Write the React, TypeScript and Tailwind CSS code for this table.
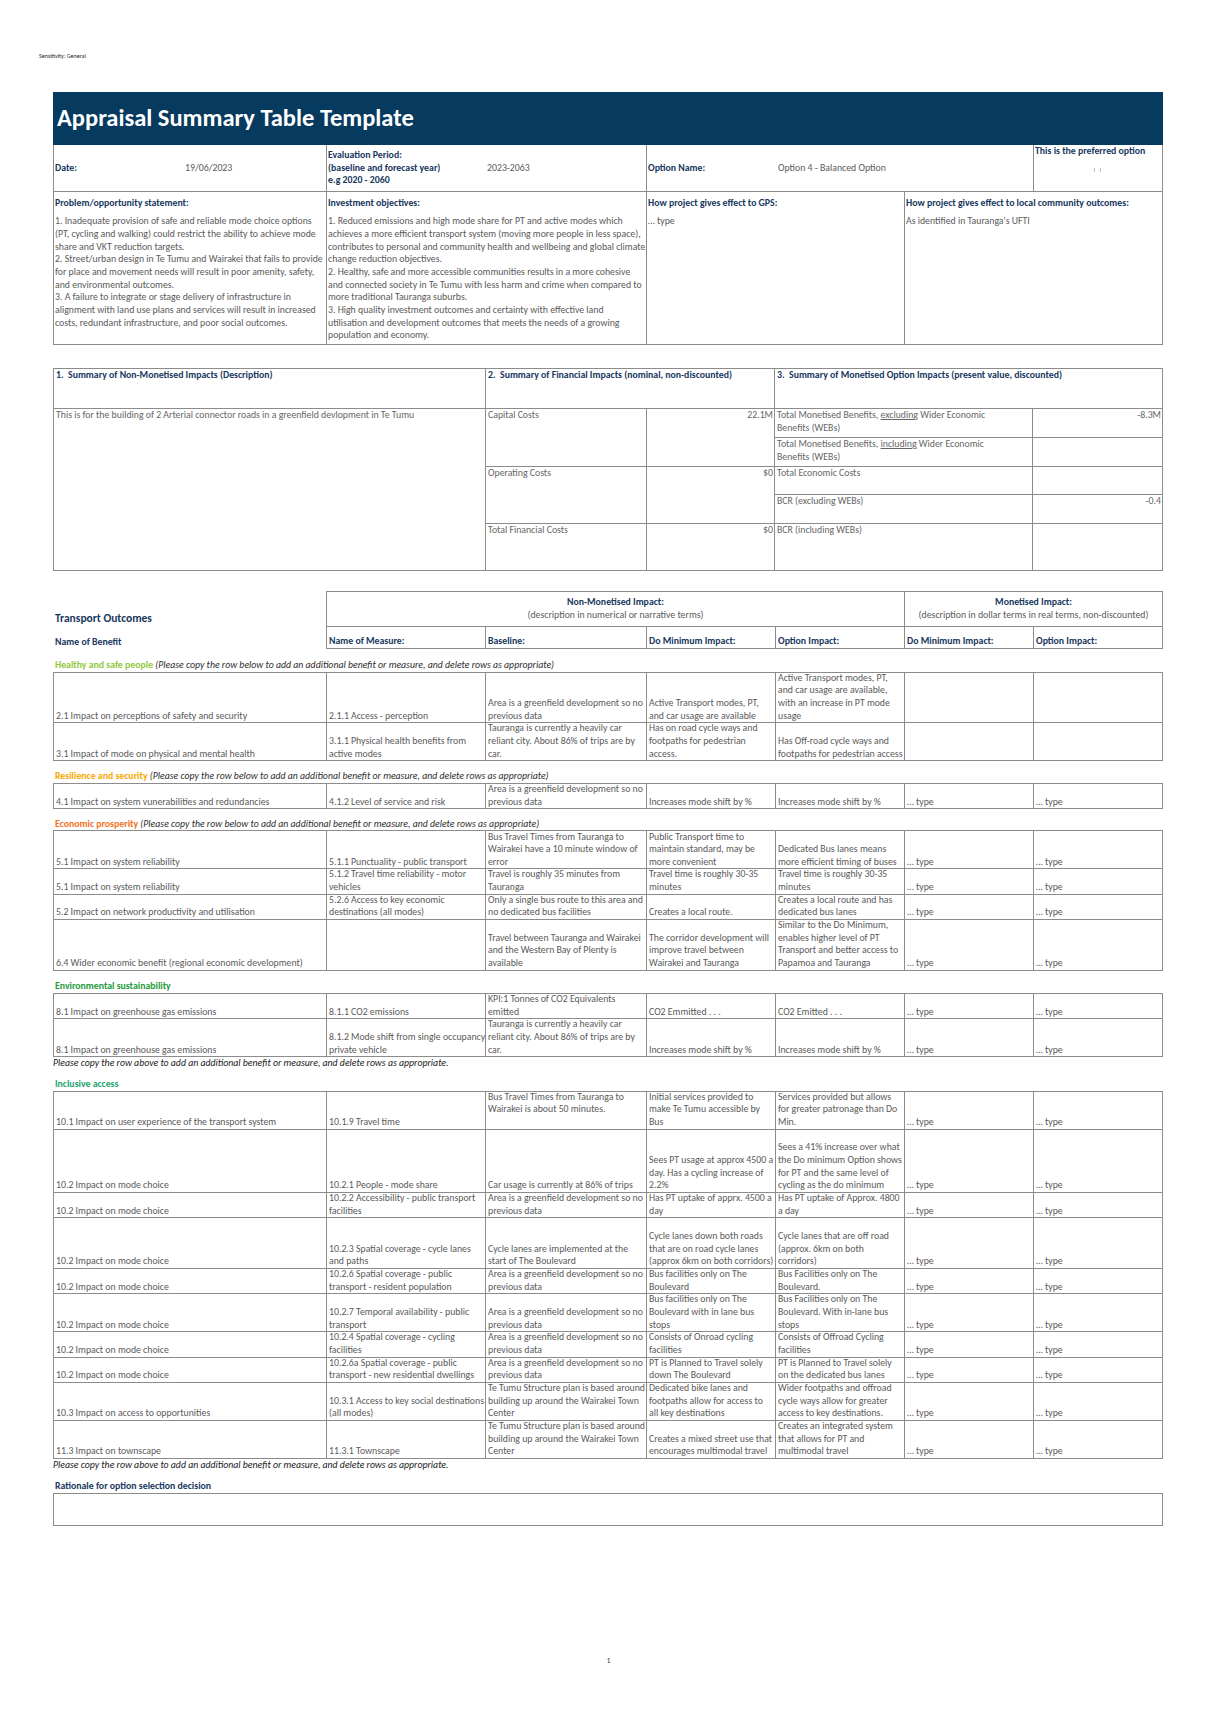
import React from "react";

type Row = { n: number; cells: string[][] };

const LH = 12.67;
const T = ["… type"];

const healthy: Row[] = [
  {
    n: 4,
    cells: [
      ["2.1 Impact on perceptions of safety and security"],
      ["2.1.1 Access - perception"],
      ["Area is a greenfield development so no", "previous data"],
      ["Active Transport modes, PT,", "and car usage are available"],
      ["Active Transport modes, PT,", "and car usage are available,", "with an increase in PT mode", "usage"],
      [],
      [],
    ],
  },
  {
    n: 3,
    cells: [
      ["3.1 Impact of mode on physical and mental health"],
      ["3.1.1 Physical health benefits from", "active modes"],
      ["Tauranga is currently a heavily car", "reliant city. About 86% of trips are by", "car."],
      ["Has on road cycle ways and", "footpaths for pedestrian", "access."],
      ["Has Off-road cycle ways and", "footpaths for pedestrian access"],
      [],
      [],
    ],
  },
];

const resilience: Row[] = [
  {
    n: 2,
    cells: [
      ["4.1 Impact on system vunerabilities and redundancies"],
      ["4.1.2 Level of service and risk"],
      ["Area is a greenfield development so no", "previous data"],
      ["Increases mode shift by %"],
      ["Increases mode shift by %"],
      T,
      T,
    ],
  },
];

const economic: Row[] = [
  {
    n: 3,
    cells: [
      ["5.1 Impact on system reliability"],
      ["5.1.1 Punctuality - public transport"],
      ["Bus Travel Times from Tauranga to", "Wairakei have a 10 minute window of", "error"],
      ["Public Transport time to", "maintain standard, may be", "more convenient"],
      ["Dedicated Bus lanes means", "more efficient timing of buses"],
      T,
      T,
    ],
  },
  {
    n: 2,
    cells: [
      ["5.1 Impact on system reliability"],
      ["5.1.2 Travel time reliability - motor", "vehicles"],
      ["Travel is roughly 35 minutes from", "Tauranga"],
      ["Travel time is roughly 30-35", "minutes"],
      ["Travel time is roughly 30-35", "minutes"],
      T,
      T,
    ],
  },
  {
    n: 2,
    cells: [
      ["5.2 Impact on network productivity and utilisation"],
      ["5.2.6 Access to key economic", "destinations (all modes)"],
      ["Only a single bus route to this area and", "no dedicated bus facilities"],
      ["Creates a local route."],
      ["Creates a local route and has", "dedicated bus lanes"],
      T,
      T,
    ],
  },
  {
    n: 4,
    cells: [
      ["6.4 Wider economic benefit (regional economic development)"],
      [],
      ["Travel between Tauranga and Wairakei", "and the Western Bay of Plenty is", "available"],
      ["The corridor development will", "improve travel between", "Wairakei and Tauranga"],
      ["Similar to the Do Minimum,", "enables higher level of PT", "Transport and better access to", "Papamoa and Tauranga"],
      T,
      T,
    ],
  },
];

const environmental: Row[] = [
  {
    n: 2,
    cells: [
      ["8.1 Impact on greenhouse gas emissions"],
      ["8.1.1 CO2 emissions"],
      ["KPI:1 Tonnes of CO2 Equivalents", "emitted"],
      ["CO2 Emmitted . . ."],
      ["CO2 Emitted . . ."],
      T,
      T,
    ],
  },
  {
    n: 3,
    cells: [
      ["8.1 Impact on greenhouse gas emissions"],
      ["8.1.2 Mode shift from single occupancy", "private vehicle"],
      ["Tauranga is currently a heavily car", "reliant city. About 86% of trips are by", "car."],
      ["Increases mode shift by %"],
      ["Increases mode shift by %"],
      T,
      T,
    ],
  },
];

const greenfield = ["Area is a greenfield development so no", "previous data"];

const inclusive: Row[] = [
  {
    n: 3,
    cells: [
      ["10.1 Impact on user experience of the transport system"],
      ["10.1.9 Travel time"],
      ["Bus Travel Times from Tauranga to", "Wairakei is about 50 minutes.", ""],
      ["Initial services provided to", "make Te Tumu accessible by", "Bus"],
      ["Services provided but allows", "for greater patronage than Do", "Min."],
      T,
      T,
    ],
  },
  {
    n: 5,
    cells: [
      ["10.2 Impact on mode choice"],
      ["10.2.1 People - mode share"],
      ["Car usage is currently at 86% of trips"],
      ["Sees PT usage at approx 4500 a", "day. Has a cycling increase of", "2.2%"],
      ["Sees a 41% increase over what", "the Do minimum Option shows", "for PT and the same level of", "cycling as the do minimum"],
      T,
      T,
    ],
  },
  {
    n: 2,
    cells: [
      ["10.2 Impact on mode choice"],
      ["10.2.2 Accessibility - public transport", "facilities"],
      greenfield,
      ["Has PT uptake of apprx. 4500 a", "day"],
      ["Has PT uptake of Approx. 4800", "a day"],
      T,
      T,
    ],
  },
  {
    n: 4,
    cells: [
      ["10.2 Impact on mode choice"],
      ["10.2.3 Spatial coverage - cycle lanes", "and paths"],
      ["Cycle lanes are implemented at the", "start of The Boulevard"],
      ["Cycle lanes down both roads", "that are on road cycle lanes", "(approx 6km on both corridors)"],
      ["Cycle lanes that are off road", "(approx. 6km on both", "corridors)"],
      T,
      T,
    ],
  },
  {
    n: 2,
    cells: [
      ["10.2 Impact on mode choice"],
      ["10.2.6 Spatial coverage - public", "transport - resident population"],
      greenfield,
      ["Bus facilities only on The", "Boulevard"],
      ["Bus Facilities only on The", "Boulevard."],
      T,
      T,
    ],
  },
  {
    n: 3,
    cells: [
      ["10.2 Impact on mode choice"],
      ["10.2.7 Temporal availability - public", "transport"],
      greenfield,
      ["Bus facilities only on The", "Boulevard with in lane bus", "stops"],
      ["Bus Facilities only on The", "Boulevard. With in-lane bus", "stops"],
      T,
      T,
    ],
  },
  {
    n: 2,
    cells: [
      ["10.2 Impact on mode choice"],
      ["10.2.4 Spatial coverage - cycling", "facilities"],
      greenfield,
      ["Consists of Onroad cycling", "facilities"],
      ["Consists of Offroad Cycling", "facilities"],
      T,
      T,
    ],
  },
  {
    n: 2,
    cells: [
      ["10.2 Impact on mode choice"],
      ["10.2.6a Spatial coverage - public", "transport - new residential dwellings"],
      greenfield,
      ["PT is Planned to Travel solely", "down The Boulevard"],
      ["PT is Planned to Travel solely", "on the dedicated bus lanes"],
      T,
      T,
    ],
  },
  {
    n: 3,
    cells: [
      ["10.3 Impact on access to opportunities"],
      ["10.3.1 Access to key social destinations", "(all modes)"],
      ["Te Tumu Structure plan is based around", "building up around the Wairakei Town", "Center"],
      ["Dedicated bike lanes and", "footpaths allow for access to", "all key destinations"],
      ["Wider footpaths and offroad", "cycle ways allow for greater", "access to key destinations."],
      T,
      T,
    ],
  },
  {
    n: 3,
    cells: [
      ["11.3 Impact on townscape"],
      ["11.3.1 Townscape"],
      ["Te Tumu Structure plan is based around", "building up around the Wairakei Town", "Center"],
      ["Creates a mixed street use that", "encourages multimodal travel"],
      ["Creates an integrated system", "that allows for PT and", "multimodal travel"],
      T,
      T,
    ],
  },
];

const problemLines = [
  "1. Inadequate provision of safe and reliable mode choice options",
  "(PT, cycling and walking) could restrict the ability to achieve mode",
  "share and VKT reduction targets.",
  "2. Street/urban design in Te Tumu and Wairakei that fails to provide",
  "for place and movement needs will result in poor amenity, safety,",
  "and environmental outcomes.",
  "3. A failure to integrate or stage delivery of infrastructure in",
  "alignment with land use plans and services will result in increased",
  "costs, redundant infrastructure, and poor social outcomes.",
];

const objectiveLines = [
  "1. Reduced emissions and high mode share for PT and active modes which",
  "achieves a more efficient transport system (moving more people in less space),",
  "contributes to personal and community health and wellbeing and global climate",
  "change reduction objectives.",
  "2. Healthy, safe and more accessible communities results in a more cohesive",
  "and connected society in Te Tumu with less harm and crime when compared to",
  "more traditional Tauranga suburbs.",
  "3. High quality investment outcomes and certainty with effective land",
  "utilisation and development outcomes that meets the needs of a growing",
  "population and economy.",
];

const financial = [
  { h: 58, label: "Capital Costs", value: "22.1M" },
  { h: 57, label: "Operating Costs", value: "$0" },
  { h: 47, label: "Total Financial Costs", value: "$0" },
];

const Lines = ({ lines }: { lines: string[] }) => (
  <>
    {lines.map((line, i) => (
      <div key={i} className="h-[12.67px] whitespace-nowrap leading-[12.67px]">
        {line === "" ? "\u00a0" : line}
      </div>
    ))}
  </>
);

const OutcomeTable = ({ rows }: { rows: Row[] }) => (
  <div className="ml-[53px] w-[1110px] border-l border-t border-[#8c8c8c]">
    {rows.map((row, i) => (
      <div
        key={i}
        className="grid grid-cols-[273px_159px_161px_129px_129px_129px_129px]"
        style={{ height: row.n * LH }}
      >
        {row.cells.map((cell, j) => (
          <div
            key={j}
            className="flex flex-col justify-end overflow-hidden border-b border-r border-[#8c8c8c] pl-[2px] text-[#5a5a5a]"
          >
            <Lines lines={cell} />
          </div>
        ))}
      </div>
    ))}
  </div>
);

const GroupLabel = ({
  title,
  color,
  note,
  mt,
}: {
  title: string;
  color: string;
  note?: boolean;
  mt: string;
}) => (
  <div className={`${mt} ml-[55px] h-[12.67px] whitespace-nowrap leading-[12.67px]`}>
    <span className={`font-bold ${color}`}>{title}</span>
    {note && (
      <span className="italic text-[#2e2e2e]">
        {" "}
        (Please copy the row below to add an additional benefit or measure, and delete rows as appropriate)
      </span>
    )}
  </div>
);

const CopyNote = () => (
  <div className="ml-[53px] h-[12.67px] whitespace-nowrap leading-[12.67px] italic text-[#1a1a1a]">
    Please copy the row above to add an additional benefit or measure, and delete rows as appropriate.
  </div>
);

export default function App() {
  return (
    <div className="h-[1722px] w-[1217px] bg-white text-[9.8px] text-[#5a5a5a] [font-family:Carlito,Lato,'Liberation_Sans',sans-serif]">
      <div className="pl-[39px] pt-[53px] text-[6px] leading-[6px] text-[#222222]">Sensitivity: General</div>

      {/* title bar */}
      <div className="ml-[53px] mt-[33px] flex h-[53px] w-[1110px] items-center bg-[#063a5e] pl-[4px]">
        <h1 className="text-[24.5px] font-bold leading-none text-white">Appraisal Summary Table Template</h1>
      </div>

      {/* date / period / option */}
      <div className="ml-[53px] flex h-[47px] w-[1110px] border-l border-[#8c8c8c]">
        <div className="flex w-[273px] items-center border-b border-r border-[#8c8c8c]">
          <span className="w-[131px] pl-[1px] font-bold text-[#17375e]">Date:</span>
          <span>19/06/2023</span>
        </div>
        <div className="flex w-[320px] items-center border-b border-r border-[#8c8c8c]">
          <div className="w-[160px] pl-[1px] font-bold text-[#17375e]">
            <Lines lines={["Evaluation Period:", "(baseline and forecast year)", "e.g 2020 - 2060"]} />
          </div>
          <span>2023-2063</span>
        </div>
        <div className="flex w-[387px] items-center border-b border-r border-[#8c8c8c]">
          <span className="w-[131px] pl-[1px] font-bold text-[#17375e]">Option Name:</span>
          <span>Option 4 - Balanced Option</span>
        </div>
        <div className="flex w-[129px] flex-col border-b border-r border-[#8c8c8c]">
          <div className="pl-[1px] font-bold text-[#17375e]">
            <Lines lines={["This is the preferred option"]} />
          </div>
          <div className="mt-[8px] text-center text-[6.5px] tracking-[1.5px] text-[#8f8f8f]">I I</div>
        </div>
      </div>

      {/* statements */}
      <div className="ml-[53px] flex h-[153px] w-[1110px] border-l border-[#8c8c8c]">
        <div className="w-[273px] border-b border-r border-[#8c8c8c] pl-[1px] pt-[4.7px]">
          <div className="font-bold text-[#17375e]">
            <Lines lines={["Problem/opportunity statement:"]} />
          </div>
          <div className="mt-[6px]">
            <Lines lines={problemLines} />
          </div>
        </div>
        <div className="w-[320px] border-b border-r border-[#8c8c8c] pl-[1px] pt-[4.7px]">
          <div className="font-bold text-[#17375e]">
            <Lines lines={["Investment objectives:"]} />
          </div>
          <div className="mt-[6px]">
            <Lines lines={objectiveLines} />
          </div>
        </div>
        <div className="w-[258px] border-b border-r border-[#8c8c8c] pl-[1px] pt-[4.7px]">
          <div className="font-bold text-[#17375e]">
            <Lines lines={["How project gives effect to GPS:"]} />
          </div>
          <div className="mt-[6px]">
            <Lines lines={["… type"]} />
          </div>
        </div>
        <div className="w-[258px] border-b border-r border-[#8c8c8c] pl-[1px] pt-[4.7px]">
          <div className="font-bold text-[#17375e]">
            <Lines lines={["How project gives effect to local community outcomes:"]} />
          </div>
          <div className="mt-[6px]">
            <Lines lines={["As identified in Tauranga's UFTI"]} />
          </div>
        </div>
      </div>

      {/* summaries */}
      <div className="ml-[53px] mt-[23px] w-[1110px] border-l border-t border-[#8c8c8c] text-[#666666]">
        <div className="flex h-[40px] font-bold text-[#17375e]">
          <div className="w-[432px] whitespace-pre border-b border-r border-[#8c8c8c] pl-[2px] leading-[12.67px]">
            1.  Summary of Non-Monetised Impacts (Description)
          </div>
          <div className="w-[289px] whitespace-pre border-b border-r border-[#8c8c8c] pl-[2px] leading-[12.67px]">
            2.  Summary of Financial Impacts (nominal, non-discounted)
          </div>
          <div className="w-[388px] whitespace-pre border-b border-r border-[#8c8c8c] pl-[2px] leading-[12.67px]">
            3.  Summary of Monetised Option Impacts (present value, discounted)
          </div>
        </div>
        <div className="flex h-[162px]">
          <div className="w-[432px] border-b border-r border-[#8c8c8c] pl-[2px]">
            <Lines lines={["This is for the building of 2 Arterial connector roads in a greenfield devlopment in Te Tumu"]} />
          </div>
          <div className="flex w-[289px] flex-col">
            {financial.map((f) => (
              <div key={f.label} className="flex" style={{ height: f.h }}>
                <div className="w-[161px] border-b border-r border-[#8c8c8c] pl-[2px]">
                  <Lines lines={[f.label]} />
                </div>
                <div className="w-[128px] border-b border-r border-[#8c8c8c] pr-[1px] text-right">
                  <Lines lines={[f.value]} />
                </div>
              </div>
            ))}
          </div>
          <div className="flex w-[388px] flex-col">
            <div className="flex h-[29px]">
              <div className="w-[258px] whitespace-nowrap border-b border-r border-[#8c8c8c] pl-[2px] leading-[12.67px]">
                Total Monetised Benefits, <span className="underline">excluding</span> Wider Economic
                <br />
                Benefits (WEBs)
              </div>
              <div className="w-[130px] border-b border-r border-[#8c8c8c] pr-[1px] text-right">
                <Lines lines={["-8.3M"]} />
              </div>
            </div>
            <div className="flex h-[29px]">
              <div className="w-[258px] whitespace-nowrap border-b border-r border-[#8c8c8c] pl-[2px] leading-[12.67px]">
                Total Monetised Benefits, <span className="underline">including</span> Wider Economic
                <br />
                Benefits (WEBs)
              </div>
              <div className="w-[130px] border-b border-r border-[#8c8c8c]" />
            </div>
            <div className="flex h-[28px]">
              <div className="w-[258px] border-b border-r border-[#8c8c8c] pl-[2px]">
                <Lines lines={["Total Economic Costs"]} />
              </div>
              <div className="w-[130px] border-b border-r border-[#8c8c8c]" />
            </div>
            <div className="flex h-[29px]">
              <div className="w-[258px] border-b border-r border-[#8c8c8c] pl-[2px]">
                <Lines lines={["BCR (excluding WEBs)"]} />
              </div>
              <div className="w-[130px] border-b border-r border-[#8c8c8c] pr-[1px] text-right">
                <Lines lines={["-0.4"]} />
              </div>
            </div>
            <div className="flex h-[47px]">
              <div className="w-[258px] border-b border-r border-[#8c8c8c] pl-[2px]">
                <Lines lines={["BCR (including WEBs)"]} />
              </div>
              <div className="w-[130px] border-b border-r border-[#8c8c8c]" />
            </div>
          </div>
        </div>
      </div>

      {/* transport outcomes header */}
      <div className="ml-[53px] mt-[20px] flex w-[1110px]">
        <div className="flex w-[273px] flex-col justify-end pl-[2px] font-bold text-[#17375e]">
          <div className="mb-[11px] text-[11.5px] leading-[14px]">Transport Outcomes</div>
          <Lines lines={["Name of Benefit"]} />
        </div>
        <div className="w-[837px] border-l border-t border-[#8c8c8c]">
          <div className="flex h-[35px]">
            <div className="w-[578px] border-b border-r border-[#8c8c8c] pt-[4px] text-center">
              <div className="font-bold text-[#17375e]">
                <Lines lines={["Non-Monetised Impact:"]} />
              </div>
              <Lines lines={["(description in numerical or narrative terms)"]} />
            </div>
            <div className="w-[258px] border-b border-r border-[#8c8c8c] pt-[4px] text-center">
              <div className="font-bold text-[#17375e]">
                <Lines lines={["Monetised Impact:"]} />
              </div>
              <Lines lines={["(description in dollar terms in real terms, non-discounted)"]} />
            </div>
          </div>
          <div className="grid h-[21.5px] grid-cols-[159px_161px_129px_129px_129px_129px] font-bold text-[#17375e]">
            {["Name of Measure:", "Baseline:", "Do Minimum Impact:", "Option Impact:", "Do Minimum Impact:", "Option Impact:"].map(
              (h, i) => (
                <div key={i} className="flex flex-col justify-end border-b border-r border-[#8c8c8c] pl-[2px]">
                  <Lines lines={[h]} />
                </div>
              )
            )}
          </div>
        </div>
      </div>

      <GroupLabel mt="mt-[10.5px]" title="Healthy and safe people" color="text-[#92c83e]" note />
      <OutcomeTable rows={healthy} />

      <GroupLabel mt="mt-[9px]" title="Resilience and security" color="text-[#f5a700]" note />
      <OutcomeTable rows={resilience} />

      <GroupLabel mt="mt-[8.5px]" title="Economic prosperity" color="text-[#f26f21]" note />
      <OutcomeTable rows={economic} />

      <GroupLabel mt="mt-[9.5px]" title="Environmental sustainability" color="text-[#1d9a3c]" />
      <OutcomeTable rows={environmental} />
      <CopyNote />

      <GroupLabel mt="mt-[8px]" title="Inclusive access" color="text-[#22a36e]" />
      <OutcomeTable rows={inclusive} />
      <CopyNote />

      <div className="ml-[55px] mt-[8.5px] h-[12.67px] whitespace-nowrap font-bold leading-[12.67px] text-[#17375e]">
        Rationale for option selection decision
      </div>
      <div className="ml-[53px] h-[33px] w-[1110px] border border-[#8c8c8c]" />

      <div className="mt-[130px] w-full text-center text-[7px] text-[#222222]">1</div>
    </div>
  );
}
